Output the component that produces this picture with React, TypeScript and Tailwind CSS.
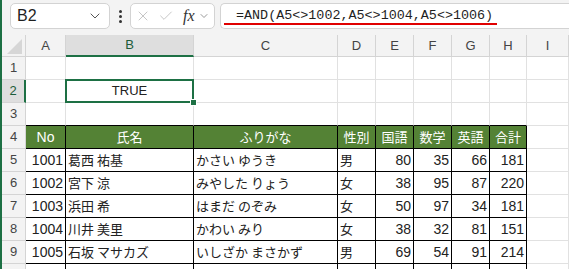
import { ChevronDown, X, Check } from "lucide-react";

const colWidths = "grid-cols-[24px_40px_128px_144px_38px_38px_38px_38px_37px_42px]";
const letters = ["A", "B", "C", "D", "E", "F", "G", "H", "I"];

const num = "font-['Liberation_Sans',sans-serif] text-[14px]";
const jp = "font-['Noto_Sans_CJK_JP',sans-serif] text-[13px]";

type CellData = { text?: string; align?: "left" | "right" | "center"; font?: string };

const data: (string | number)[][] = [
  [1001, "葛西 祐基", "かさい ゆうき", "男", 80, 35, 66, 181],
  [1002, "宮下 涼", "みやした りょう", "女", 38, 95, 87, 220],
  [1003, "浜田 希", "はまだ のぞみ", "女", 50, 97, 34, 181],
  [1004, "川井 美里", "かわい みり", "女", 38, 32, 81, 151],
  [1005, "石坂 マサカズ", "いしざか まさかず", "男", 69, 54, 91, 214],
];

const header = ["No", "氏名", "ふりがな", "性別", "国語", "数学", "英語", "合計"];

function rowCells(r: number): CellData[] {
  const blank: CellData[] = letters.map(() => ({}));
  if (r === 2) {
    blank[1] = { text: "TRUE", align: "center", font: "font-['Liberation_Sans',sans-serif] text-[13px]" };
  }
  if (r >= 5 && r <= 9) {
    const d = data[r - 5];
    return letters.map((_, c) => {
      if (c > 7) return {};
      const v = d[c];
      if (typeof v === "number") return { text: String(v), align: "right", font: num };
      return { text: v, align: "left", font: jp };
    });
  }
  return blank;
}

export default function App() {
  const rows = [1, 2, 3, 4, 5, 6, 7, 8, 9, 10];
  return (
    <div className="h-[269px] w-[569px] overflow-hidden border-l-2 border-[#1d7044] bg-[#f3f3f3] text-[#222]">
      {/* Formula bar */}
      <div className="flex h-[35px] items-start pt-[3px]">
        <div className="ml-[8px] flex h-[26px] w-[100px] items-center justify-between rounded-[5px] border border-[#d3d3d3] bg-white pl-[6px] pr-[6px]">
          <span className="font-['Liberation_Sans',sans-serif] text-[16px] text-[#1f1f1f]">B2</span>
          <ChevronDown className="h-4 w-4 text-[#555]" strokeWidth={1.5} />
        </div>
        <div className="ml-[9px] mr-[8px] flex h-[26px] flex-col items-center justify-center gap-[2px]">
          <span className="h-[3px] w-[3px] rounded-full bg-[#333]" />
          <span className="h-[3px] w-[3px] rounded-full bg-[#333]" />
          <span className="h-[3px] w-[3px] rounded-full bg-[#333]" />
        </div>
        <div className="flex h-[26px] w-[85px] items-center rounded-[5px] border border-[#d3d3d3] bg-white pl-[4px]">
          <X className="h-[16px] w-[16px] text-[#bdbdbd]" strokeWidth={1.3} />
          <Check className="ml-[7px] h-[16px] w-[16px] text-[#bdbdbd]" strokeWidth={1.3} />
          <span className="ml-[9px] font-['Liberation_Serif',serif] text-[16px] italic leading-none text-[#333]">fx</span>
          <ChevronDown className="ml-[3px] h-[12px] w-[12px] text-[#777]" strokeWidth={1.5} />
        </div>
        <div className="ml-[5px] flex h-[26px] flex-1 items-start rounded-l-[5px] border border-r-0 border-[#d3d3d3] bg-white pl-[3px] pt-[4px]">
          <span className="border-b-2 border-[#e00000] pl-[12px] pr-[4px] font-['Liberation_Mono',monospace] text-[13.4px] leading-[15px] text-[#1f1f1f]">
            =AND(A5&lt;&gt;1002,A5&lt;&gt;1004,A5&lt;&gt;1006)
          </span>
        </div>
      </div>

      {/* Sheet grid */}
      <div className={`grid ${colWidths} bg-white`}>
        {/* column header row */}
        <div className="relative h-[22px] border-b border-r border-[#d4d4d4] bg-[#f3f3f3]">
          <div className="absolute bottom-[2px] right-[3px] h-0 w-0 border-b-[15px] border-l-[15px] border-b-[#d6d6d6] border-l-transparent" />
        </div>
        {letters.map((l) =>
          l === "B" ? (
            <div
              key={l}
              className="flex h-[22px] items-center justify-center border-b-2 border-r border-b-[#1d7044] border-r-[#d4d4d4] bg-[#dedede] font-['Liberation_Sans',sans-serif] text-[13px] text-[#1d5c3a]"
            >
              {l}
            </div>
          ) : (
            <div
              key={l}
              className="flex h-[22px] items-center justify-center border-b border-r border-[#d4d4d4] bg-[#f3f3f3] font-['Liberation_Sans',sans-serif] text-[13px] text-[#444]"
            >
              {l}
            </div>
          )
        )}

        {rows.map((r) => {
          const cells = rowCells(r);
          return [
            r === 2 ? (
              <div
                key={`h${r}`}
                className="flex h-[23px] items-center justify-center border-b border-r-2 border-b-[#d4d4d4] border-r-[#1d7044] bg-[#dedede] font-['Liberation_Sans',sans-serif] text-[13px] text-[#1d5c3a]"
              >
                {r}
              </div>
            ) : (
              <div
                key={`h${r}`}
                className="flex h-[23px] items-center justify-center border-b border-r border-[#d4d4d4] bg-[#f3f3f3] font-['Liberation_Sans',sans-serif] text-[13px] text-[#444]"
              >
                {r < 10 ? r : ""}
              </div>
            ),
            ...cells.map((cell, c) => {
              const inTable = r >= 4 && c <= 7;
              const rightB = inTable ? "border-r-black" : "border-r-[#e1e1e1]";
              const bottomB = inTable || (r === 3 && c <= 7) ? "border-b-black" : "border-b-[#e1e1e1]";
              if (r === 4 && c <= 7) {
                return (
                  <div
                    key={`${r}-${c}`}
                    className={`flex h-[23px] items-center justify-center border-b border-r ${rightB} ${bottomB} bg-[#548235] text-white ${
                      c === 0 ? "font-['Liberation_Sans',sans-serif] text-[14px]" : jp
                    }`}
                  >
                    {header[c]}
                  </div>
                );
              }
              const justify =
                cell.align === "right" ? "justify-end pr-[2px]" : cell.align === "center" ? "justify-center" : "justify-start pl-[2px]";
              const selected = r === 2 && c === 1;
              return (
                <div
                  key={`${r}-${c}`}
                  className={`relative flex h-[23px] items-center whitespace-nowrap border-b border-r ${rightB} ${bottomB} ${justify} ${cell.font ?? ""} ${
                    selected ? "z-10" : ""
                  }`}
                >
                  {cell.text}
                  {selected && (
                    <>
                      <div className="pointer-events-none absolute -left-[1px] -top-[1px] bottom-[-1px] right-[-1px] border-2 border-[#1d7044]" />
                      <div className="absolute -bottom-[4px] -right-[4px] h-[7px] w-[7px] border border-white bg-[#1d7044]" />
                    </>
                  )}
                </div>
              );
            }),
          ];
        })}
      </div>
    </div>
  );
}
